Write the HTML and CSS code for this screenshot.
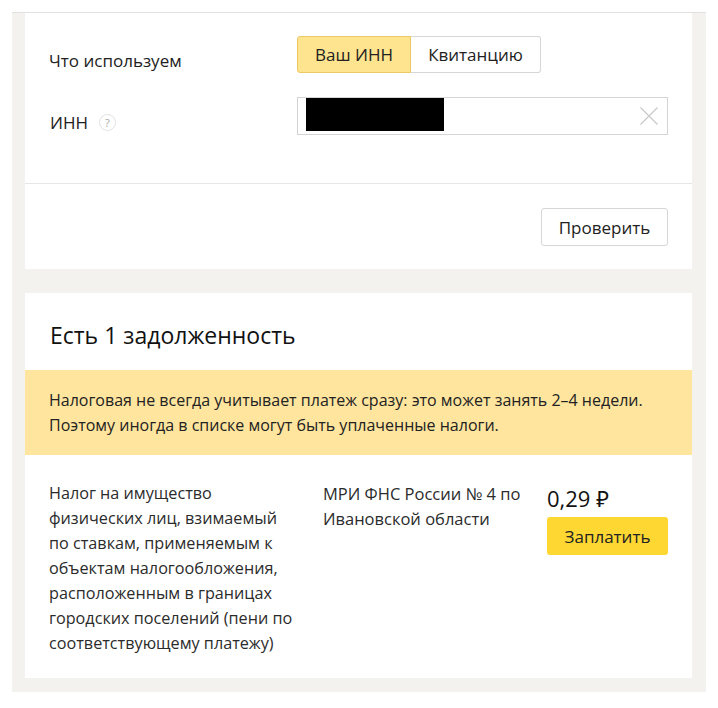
FILE: index.html
```html
<!DOCTYPE html>
<html lang="ru">
<head>
<meta charset="utf-8">
<title>Налоги</title>
<link rel="stylesheet" href="styles.css">
</head>
<body>
<main class="page">
  <section class="card">
    <div class="form">
      <div class="row row-use">
        <div class="label">Что используем</div>
        <div class="segment">
          <button class="seg seg-on">Ваш ИНН</button>
          <button class="seg">Квитанцию</button>
        </div>
      </div>
      <div class="row row-inn">
        <div class="label label-inn">ИНН <span class="help">?</span></div>
        <div class="input">
          <span class="redact"></span>
          <svg class="clear" width="18" height="18" viewBox="0 0 18 18"><path d="M.5.5 17.500 17.500M17.500.5.5 17.500" stroke="#c9c9c9" stroke-width="1.200" fill="none"/></svg>
        </div>
      </div>
    </div>
    <div class="actions"><button class="btn">Проверить</button></div>
  </section>
  <section class="card card-debt">
    <h2 class="title">Есть 1 задолженность</h2>
    <div class="notice">Налоговая не всегда учитывает платеж сразу: это может занять 2–4 недели.<br>Поэтому иногда в списке могут быть уплаченные налоги.</div>
    <div class="debt">
      <div class="debt-name">Налог на имущество<br>физических лиц, взимаемый<br>по ставкам, применяемым к<br>объектам налогообложения,<br>расположенным в границах<br>городских поселений (пени по<br>соответствующему платежу)</div>
      <div class="debt-org">МРИ ФНС России № 4 по<br>Ивановской области</div>
      <div class="debt-pay">
        <div class="price">0,29 ₽</div>
        <button class="btn-pay">Заплатить</button>
      </div>
    </div>
  </section>
</main>
</body>
</html>
```
FILE: styles.css
```css
* { box-sizing: border-box; }
html, body { margin: 0; background: #fff; }
body {
  padding: 12px 12px 0;
  font-family: "Open Sans", "Noto Sans", sans-serif;
  font-size: 16px;
  line-height: 25px;
  color: #222;
}
button { font: inherit; color: inherit; cursor: pointer; }
.page {
  width: 694px;
  height: 680px;
  padding: 0 14px 14px 13px;
  background: #f3f2ef;
  border-top: 1px solid #e2e1df;
}
.card { background: #fff; height: 256px; display: flex; flex-direction: column; }
.card-debt { height: 385px; margin-top: 24px; }
.form { height: 171px; padding: 23px 24px 0; border-bottom: 1px solid #e6e6e6; }
.row { display: flex; }
.row-use { height: 37px; align-items: center; }
.row-inn { height: 38px; margin-top: 24px; align-items: center; }
.label { width: 248px; font-size: 17px; padding-top: 11px; }
.label-inn { display: flex; align-items: center; gap: 11px; padding: 13px 0 0 1px; font-size: 17px; }
.help {
  width: 17px; height: 17px; border: 1px solid #e2e2e2; border-radius: 50%;
  font-size: 11px; line-height: 15px; text-align: center; color: #aaa;
}
.segment { display: flex; width: 244px; height: 37px; }
.seg {
  height: 37px; width: 130px; padding: 0; background: #fff;
  border: 1px solid #d6d6d6; border-radius: 0 3px 3px 0; border-left: 0;
  font-size: 17px;
}
.seg-on {
  width: 114px; background: #ffe48f; border: 1px solid #ecc866; border-radius: 3px 0 0 3px;
}
.input {
  width: 371px; height: 38px; border: 1px solid #d4d4d4;
  display: flex; align-items: flex-start; justify-content: space-between;
  padding-left: 8px; padding-right: 9px;
}
.redact { width: 138px; height: 33px; background: #000; }
.clear { margin-top: 9px; }
.actions { display: flex; justify-content: flex-end; padding: 24px 24px 0; }
.btn {
  width: 127px; height: 38px; padding: 0; background: #fff;
  border: 1px solid #d6d6d6; border-radius: 3px; font-size: 17px;
}
.title { margin: 0; height: 77px; padding: 26px 0 0 25px; font-size: 23px; line-height: 32px; font-weight: 400; color: #111; }
.notice { height: 85px; padding: 18px 24px 0; background: #ffe59e; }
.debt { display: flex; padding: 26px 24px 0; }
.debt-name { width: 274px; font-size: 16.2px; color: #2b2b2b; }
.debt-org { width: 224px; font-size: 16.5px; color: #2b2b2b; }
.debt-pay { width: 121px; }
.price { font-size: 22px; line-height: 28px; padding-top: 3px; color: #111; }
.btn-pay {
  display: block; width: 121px; height: 38px; margin-top: 5px; padding: 0;
  background: #ffd733; border: 0; border-radius: 3px; font-size: 17px;
}
```
